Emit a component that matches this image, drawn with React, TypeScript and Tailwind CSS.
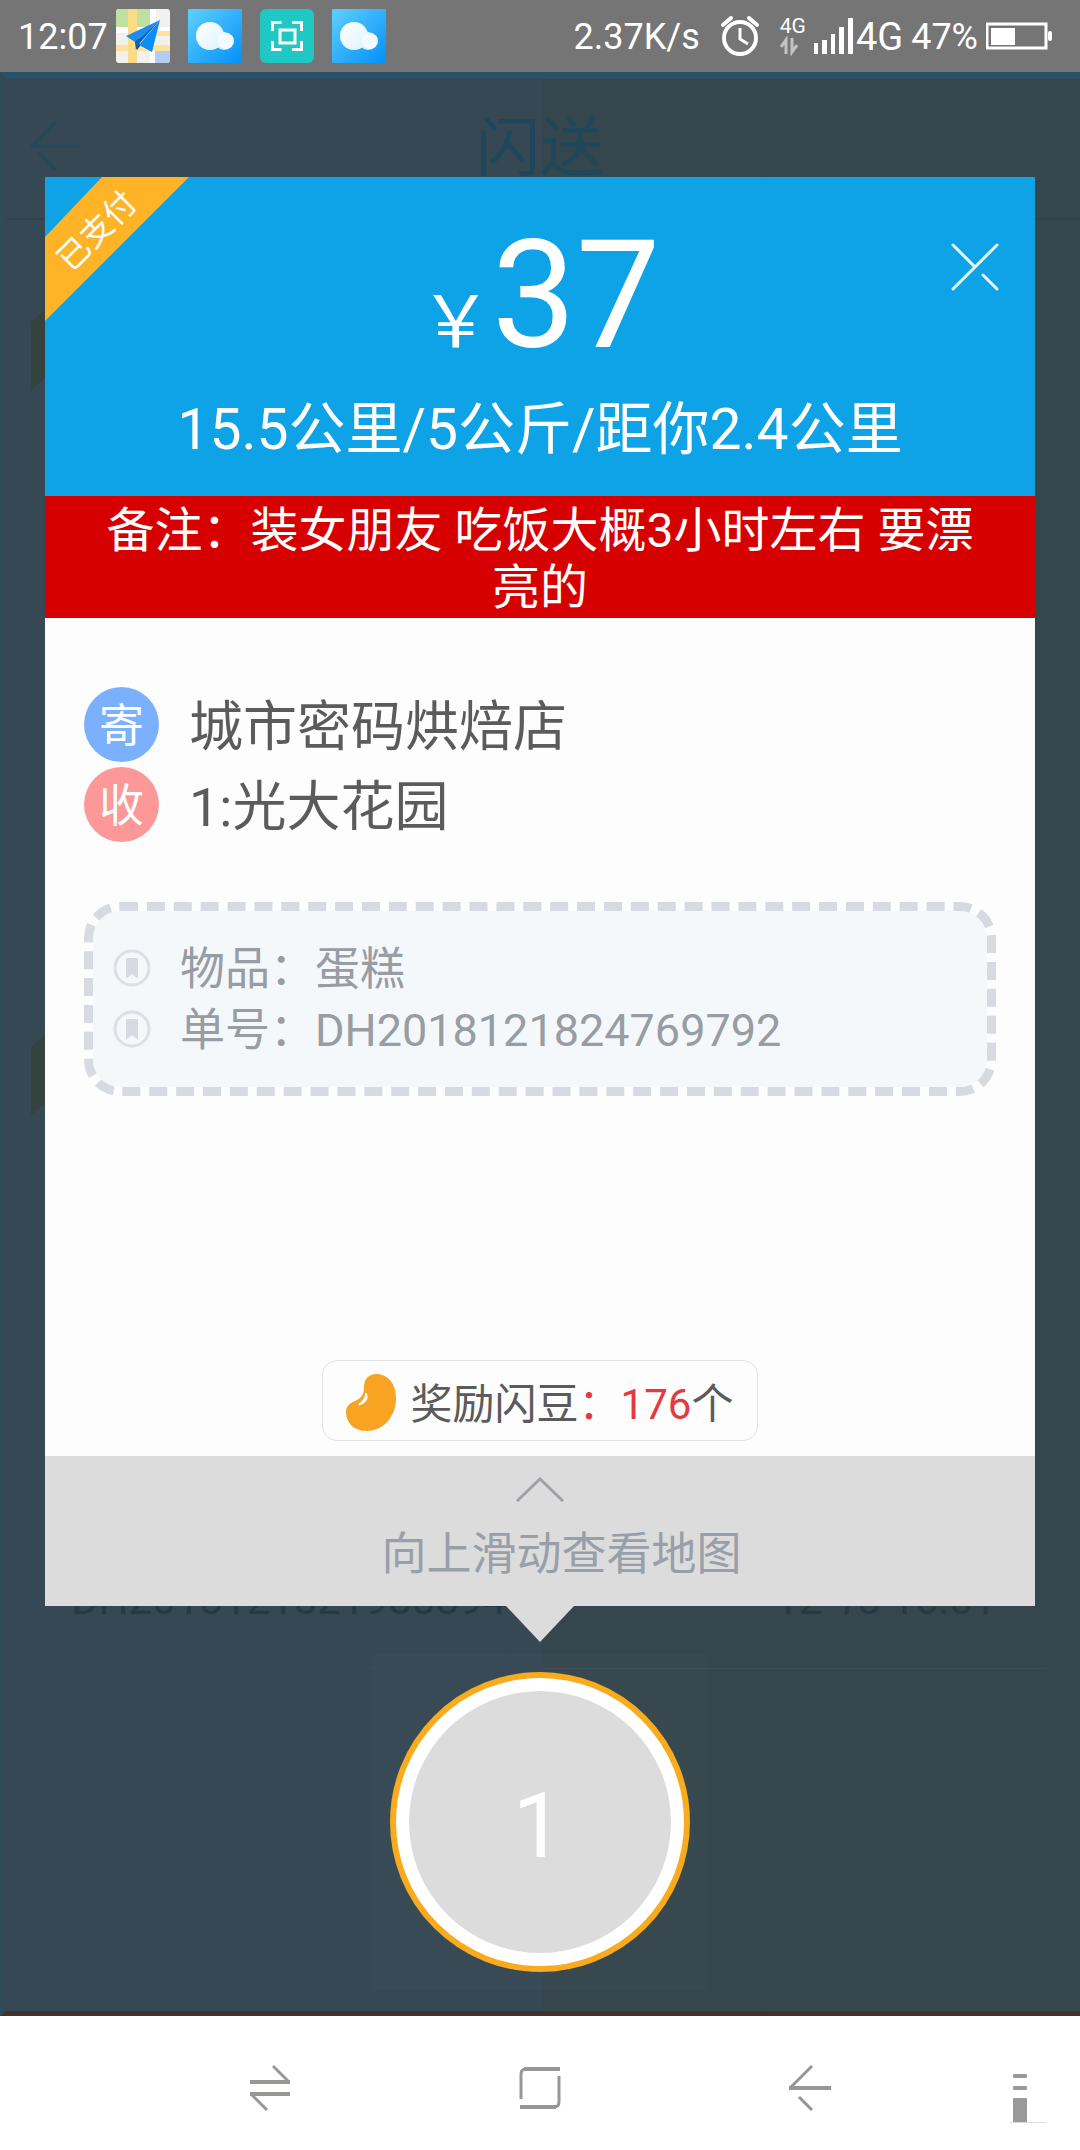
import { ReactNode, useState } from 'react'

interface Stop {
  badge: string
  color: string
  name: string
}

interface Detail {
  label: string
  value: string
}

const stops: Stop[] = [
  { badge: '寄', color: 'bg-[#7bb0ff]', name: '城市密码烘焙店' },
  { badge: '收', color: 'bg-[#fc9898]', name: '1:光大花园' },
]

const details: Detail[] = [
  { label: '物品：', value: '蛋糕' },
  { label: '单号：', value: 'DH2018121824769792' },
]

function MapIcon() {
  return (
    <svg className="size-[54px]" viewBox="0 0 54 54">
      <clipPath id="map-clip">
        <rect width="54" height="54" rx="3" />
      </clipPath>
      <g clipPath="url(#map-clip)">
        <rect width="54" height="54" fill="#f3f1ee" />
        <rect width="35" height="18" fill="#bfe0a0" />
        <rect y="18" width="54" height="6" fill="#ffffff" />
        <rect x="34" width="6" height="54" fill="#ffffff" />
        <rect y="36" width="54" height="6" fill="#fde29a" />
        <path d="M40 22h14v5H40z" fill="#fde29a" />
        <rect x="12" width="9" height="54" fill="#fddc86" />
        <rect x="39" y="42" width="15" height="12" fill="#b3cdf0" />
        <path d="M19 32l4-3 1 8-3 4z" fill="#0b4a8c" />
        <path d="M44 11L10 27l9 6z" fill="#1a8df0" />
        <path d="M44 11L23 35l-3 6-1-8z" fill="#0a63bd" />
        <path d="M44 11L23 36l13 7z" fill="#0c8cf8" />
      </g>
    </svg>
  )
}

function CloudIcon({ id }: { id: string }) {
  return (
    <svg className="size-[54px]" viewBox="0 0 54 54">
      <defs>
        <linearGradient id={`${id}-sky`} x1="0" y1="0" x2="1" y2="1">
          <stop offset="0" stopColor="#5fd0fb" />
          <stop offset="1" stopColor="#0390fb" />
        </linearGradient>
        <linearGradient id={`${id}-puff`} x1="0" y1="0" x2="1" y2="1">
          <stop offset="0" stopColor="#ffffff" />
          <stop offset="1" stopColor="#dff2ff" />
        </linearGradient>
      </defs>
      <rect width="54" height="54" rx="1" fill={`url(#${id}-sky)`} />
      <circle cx="36" cy="32" r="9" fill="#d3ecfd" />
      <circle cx="22" cy="27" r="14" fill={`url(#${id}-puff)`} />
      <circle cx="38" cy="32" r="8" fill="#f4fbff" />
    </svg>
  )
}

function ScanIcon() {
  return (
    <svg className="size-[54px]" viewBox="0 0 54 54">
      <rect width="54" height="54" rx="6" fill="#20c8c3" />
      <g fill="none" stroke="#fff" strokeWidth="3">
        <rect x="20" y="21" width="15" height="13" />
        <path d="M12.5 22v-8.500h9M32 13.500h9.500v8.500M41.500 32v8.500H32M21.500 40.500h-9V32" />
      </g>
    </svg>
  )
}

function StatusBar() {
  return (
    <header className="flex h-[72px] items-center justify-between bg-[#757575] pl-[18px] pr-[26px] text-[36px] leading-[54px] text-white">
      <div className="flex items-center">
        <span className="mr-2 pt-0.5">12:07</span>
        <div className="flex gap-[18px]">
          <MapIcon />
          <CloudIcon id="cloud-a" />
          <ScanIcon />
          <CloudIcon id="cloud-b" />
        </div>
      </div>
      <div className="flex items-center">
        <span className="pt-0.5">2.37K/s</span>
        <svg className="ml-5 h-[40px] w-[40px]" viewBox="0 0 40 40" fill="none" stroke="#fff">
          <circle cx="20" cy="22" r="16" strokeWidth="4" />
          <path d="M20 12v11l8 5" strokeWidth="3" />
          <path d="M3 9l8-7M37 9l-8-7" strokeWidth="4" strokeLinecap="round" />
        </svg>
        <div className="ml-5 flex flex-col">
          <span className="text-[21px] leading-5">4G</span>
          <svg className="h-[20px] w-[18px]" viewBox="0 0 18 20" fill="none" stroke="#c4c4c4" strokeWidth="3">
            <path d="M6 18V4L1 11M12 2v14l5-7" />
          </svg>
        </div>
        <svg className="ml-2 h-[36px] w-[40px]" viewBox="0 0 40 36" fill="#fff">
          <path d="M0 25h4v11H0zM8 22h5v14H8zM17 16h4v20h-4zM25 9h5v27h-5zM34 0h5v36h-5z" />
        </svg>
        <span className="ml-0.5 pt-0.5 text-[38px]">4G</span>
        <span className="ml-2 pt-0.5">47%</span>
        <svg className="ml-2 h-[28px] w-[68px]" viewBox="0 0 68 28">
          <rect x="1" y="2" width="59" height="24" fill="none" stroke="#fff" strokeWidth="3" />
          <rect x="5" y="6" width="24" height="17" fill="#fff" />
          <rect x="62" y="9" width="4" height="10" rx="2" fill="#fff" />
        </svg>
      </div>
    </header>
  )
}

// The order list page, dimmed behind the dialog
function DimmedList() {
  return (
    <div
      aria-hidden="true"
      className="absolute inset-0 overflow-hidden border-b-[5px] border-l-[6px] border-t-[7px] border-b-[#42322e] border-l-[#2e4c56] border-t-[#2b5166] bg-linear-to-r from-[#354853] from-50% to-[#36464d] to-50%"
    >
      <div className="relative flex h-[141px] items-center justify-center border-b-2 border-[#33434b] pr-1.5 text-[64px] text-[#1f475a]">
        <svg className="absolute left-6 top-[42px] h-[50px] w-[52px]" viewBox="0 0 52 50" fill="none" stroke="#22485a" strokeWidth="3">
          <path d="M26 1L2 25h48M9 32l17 17" />
        </svg>
        闪送
      </div>
      <div className="ml-[25px] mr-6 flex flex-col">
        <div className="mt-[85px] h-[85px] w-5 bg-[#35433f] [clip-path:polygon(0_20%,100%_0,100%_80%,0_100%)]" />
        <div className="mt-[640px] h-[85px] w-5 bg-[#35433f] [clip-path:polygon(0_20%,100%_0,100%_80%,0_100%)]" />
        <div className="mt-[460px] flex h-[94px] justify-between rounded-b-xl border-b border-[#3a4c56] pl-10 pr-[60px] text-[42px] leading-[50px] text-[#243a44]">
          <span>DH2018121821988894</span>
          <span>12-18 16:51</span>
        </div>
      </div>
    </div>
  )
}

function PriceHeader({ onClose }: { onClose: () => void }) {
  return (
    <div className="relative h-[319px] bg-[#0ea2e6] pt-[31px] text-center text-white">
      <div className="absolute left-0 top-0 size-[144px] bg-[#ffb428] [clip-path:polygon(57px_0,100%_0,0_100%,0_60px)]">
        <span className="absolute left-[-20px] top-[31px] w-[144px] -rotate-45 text-[32px] leading-[46px]">已支付</span>
      </div>
      <button aria-label="关闭" onClick={onClose} className="absolute right-9 top-[66px]">
        <svg className="size-[48px]" viewBox="0 0 48 48" fill="none" stroke="#e4faff" strokeWidth="3" strokeLinecap="round">
          <path d="M2 2l22 22M32 32l14 14M46 2L2 46" />
        </svg>
      </button>
      <p className="text-[150px] leading-[176px]">
        <span className="text-[72px] leading-none">￥</span>37
      </p>
      <p className="text-[57px] leading-[92px]">15.5公里/5公斤/距你2.4公里</p>
    </div>
  )
}

function DetailBox({ items }: { items: Detail[] }) {
  return (
    <dl className="mt-[60px] rounded-[36px] border-[9px] border-dashed border-[#d7dae1] bg-[#f4f8fb] bg-clip-padding px-[19px] py-[27px] text-[45px] leading-[59px] text-[#989ca3]">
      {items.map((item) => (
        <div key={item.label} className="flex items-center">
          <svg className="mr-[29px] size-[39px]" viewBox="0 0 39 39">
            <circle cx="20" cy="19" r="17" fill="none" stroke="#dcdfe5" strokeWidth="3" />
            <path d="M14 9h12v21l-6-5-6 5z" fill="#d7dae3" />
          </svg>
          <dt className="pt-0.5">{item.label}</dt>
          <dd className="pt-0.5">{item.value}</dd>
        </div>
      ))}
    </dl>
  )
}

function RewardPill({ count }: { count: number }) {
  return (
    <div className="mx-auto mt-[264px] flex h-[81px] items-center rounded-[15px] border border-[#e2e2e4] pl-[22px] pr-6 pt-1 text-[42px] text-[#5b5b5b]">
      <svg className="mr-[14px] h-[58px] w-[52px]" viewBox="0 0 52 58">
        <path
          d="M31 0c12 0 20 10 20 24 0 19-13 33-29 33C9 57 1 49 1 38c0-6 4-9 9-11 7-3 9-7 9-14C19 5 24 0 31 0z"
          fill="#f8a322"
        />
        <path d="M14 30c3-2 6-5 7-11 3 5 0 10-7 12z" fill="#fff" stroke="#fff" strokeLinejoin="round" />
      </svg>
      <p className="pt-1">
        奖励闪豆<span className="text-[#e23a40]">：{count}</span>个
      </p>
    </div>
  )
}

function NavButton({ label, children }: { label: string; children: ReactNode }) {
  return (
    <button aria-label={label} className="flex h-[60px] w-[196px] items-center justify-center">
      <svg className="h-[48px] w-[44px]" viewBox="0 0 44 48" fill="none" stroke="#999696" strokeWidth="4">
        {children}
      </svg>
    </button>
  )
}

function BottomNav() {
  return (
    <nav className="relative flex h-[134px] items-center justify-center gap-[74px] bg-white pt-2.5">
      <NavButton label="切换">
        <path d="M2 18h40M2 30h40" />
        <path d="M25 2l16 16M3 30l16 16" strokeWidth="3" />
      </NavButton>
      <NavButton label="主页">
        <path d="M42 5H6M2 43h36" />
        <path d="M8 5q-5 0-5 5v25M41 12v26q0 5-5 5" strokeWidth="3" />
      </NavButton>
      <NavButton label="返回">
        <path d="M1 24h42" />
        <path d="M24 2L2 24M11 33l13 13" strokeWidth="3" />
      </NavButton>
      <button aria-label="菜单" className="absolute right-[34px] top-[58px]">
        <svg className="h-[50px] w-[36px]" viewBox="0 0 36 50" fill="#999">
          <rect x="3" width="14" height="4" rx="1" />
          <rect x="3" y="12" width="14" height="4" rx="1" />
          <rect x="3" y="24" width="14" height="25" rx="1" />
          <rect x="0" y="48" width="36" height="1" fill="#ddd" />
        </svg>
      </button>
    </nav>
  )
}

export default function App() {
  const [open, setOpen] = useState(true)

  return (
    <div className="flex min-h-screen flex-col font-['Roboto','Noto_Sans_CJK_SC',sans-serif]">
      <StatusBar />
      <main className="relative flex-1">
        <DimmedList />
        {open && (
          <div className="relative flex flex-col items-center px-[45px] pt-[105px]">
            <section role="dialog" aria-label="订单" className="w-full bg-[#fdfdfd]">
              <PriceHeader onClose={() => setOpen(false)} />
              <p className="bg-[#d70000] px-12 pb-0.5 pt-1.5 text-center text-[48px] leading-[57px] text-white">
                备注：装女朋友 吃饭大概3小时左右 要漂亮的
              </p>
              <div className="flex flex-col px-[39px] pb-[15px] pt-[69px]">
                <ul className="flex flex-col gap-[5px]">
                  {stops.map((stop) => (
                    <li key={stop.badge} className="flex items-center gap-[30px] text-[54px] text-[#5b5b5b]">
                      <span className={`size-[75px] rounded-full text-center text-[45px] leading-[79px] text-white ${stop.color}`}>
                        {stop.badge}
                      </span>
                      <span className="pt-1.5 leading-[69px]">{stop.name}</span>
                    </li>
                  ))}
                </ul>
                <DetailBox items={details} />
                <RewardPill count={176} />
              </div>
              <div className="flex h-[150px] flex-col items-center bg-[#dcdcdc] pt-[21px] text-[45px] text-[#999fa9]">
                <svg className="h-[25px] w-[48px]" viewBox="0 0 48 25" fill="none" stroke="#a0a2a8" strokeWidth="3">
                  <path d="M1 24L24 2l23 22" />
                </svg>
                <p className="mt-[19px] pl-[43px] leading-[68px]">向上滑动查看地图</p>
              </div>
            </section>
            <svg className="h-[36px] w-[68px]" viewBox="0 0 68 36">
              <path d="M0 0h68L34 36z" fill="#dcdcdc" />
            </svg>
            <div className="mt-3 bg-[#ffffff03] p-[18px]">
              <button className="size-[300px] rounded-full border-[6px] border-[#f8ab1c] bg-white p-[13px]">
                <span className="flex size-full items-center justify-center rounded-full bg-[#dcdcdc] pr-1 pt-2 text-[90px] text-white">
                  1
                </span>
              </button>
            </div>
          </div>
        )}
      </main>
      <BottomNav />
    </div>
  )
}
